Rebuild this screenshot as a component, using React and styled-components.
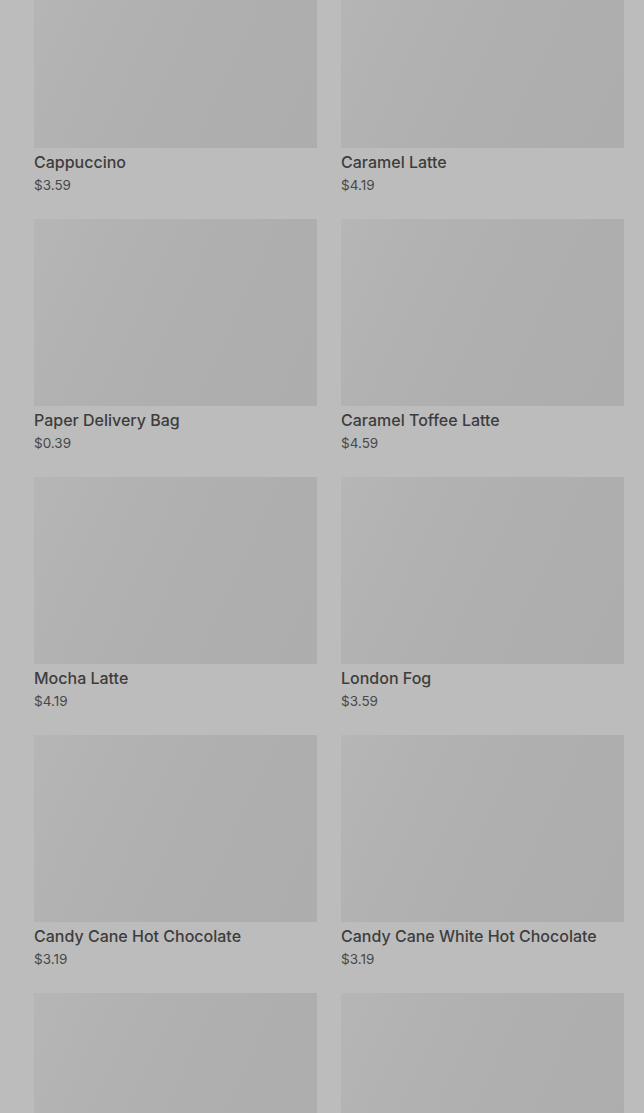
import styled, { createGlobalStyle } from 'styled-components';

const products = [
    { name: 'Cappuccino', price: 3.59 },
    { name: 'Caramel Latte', price: 4.19 },
    { name: 'Paper Delivery Bag', price: 0.39 },
    { name: 'Caramel Toffee Latte', price: 4.59 },
    { name: 'Mocha Latte', price: 4.19 },
    { name: 'London Fog', price: 3.59 },
    { name: 'Candy Cane Hot Chocolate', price: 3.19 },
    { name: 'Candy Cane White Hot Chocolate', price: 3.19 },
    { name: 'Peppermint Mocha', price: 4.59 },
    { name: 'Hot Chocolate', price: 2.99 },
];

const App = () => {
    return (
        <>
            <GlobalStyle />
            <Page>
                <Grid>
                    {products.map((item, index) => (
                        <Card key={index}>
                            <Thumb />
                            <Name>{item.name}</Name>
                            <Price>${item.price.toFixed(2)}</Price>
                        </Card>
                    ))}
                </Grid>
            </Page>
        </>
    );
};

const GlobalStyle = createGlobalStyle`
    html, body {
        margin: 0;
        padding: 0;
        background: #bcbcbc;
        overflow: hidden;
    }
`;
const Page = styled.div`
    height: 100vh;
    overflow: hidden;
    background: #bcbcbc;
    box-sizing: border-box;
    padding: 0 20px 0 34px;
    font-family: Inter, 'Liberation Sans', sans-serif;
`;
const Grid = styled.div`
    display: grid;
    grid-template-columns: 283px 283px;
    column-gap: 24px;
    row-gap: 24px;
    margin-top: -39px;
`;
const Card = styled.div`
    display: flex;
    flex-direction: column;
`;
const Thumb = styled.div`
    height: 187px;
    background: linear-gradient(115deg, #b6b6b6 0%, #b2b2b2 25%, #afafaf 55%, #adadad 100%);
`;
const Name = styled.div`
    margin-top: 3px;
    font-size: 16px;
    line-height: 22px;
    font-weight: 500;
    color: #3d3d3d;
    white-space: nowrap;
`;
const Price = styled.div`
    margin-top: 2px;
    font-size: 13.5px;
    line-height: 20px;
    color: #484848;
`;

export default App;
